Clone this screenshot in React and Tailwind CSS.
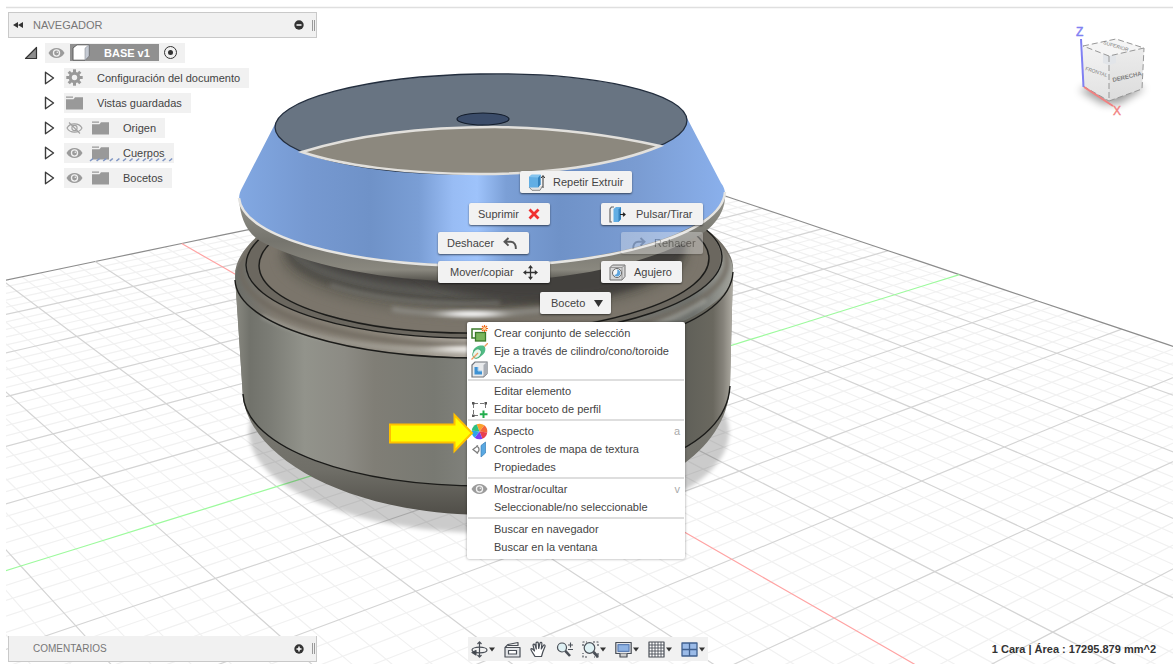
import { useState } from "react";

// [gridX, gridY, screenX, screenY] samples used to fit the ground plane
const ANCHORS = [
  [-6, -1, 95, 261],
  [0, -3, 155, 525],
  [-4, -2, 77, 336],
  [-2, -2, 166, 404],
  [3, 0, 732, 559],
  [4, 0, 834, 618],
  [1, 2, 745, 399],
  [5, 1, 1053, 632],
  [3, 3, 1004, 447],
  [2, 6, 1122, 329],
  [1, 5, 972, 323],
  [-6, 0, 182, 244],
];

function fitPlane(anchors) {
  const n = 8;
  const m = Array.from({ length: n }, () => new Array(n + 1).fill(0));
  for (const [u, v, px, py] of anchors) {
    const x = px / 1000;
    const y = py / 1000;
    const rows = [
      [u, v, 1, 0, 0, 0, -u * x, -v * x, x],
      [0, 0, 0, u, v, 1, -u * y, -v * y, y],
    ];
    for (const r of rows) {
      for (let i = 0; i < n; i++) {
        for (let j = 0; j <= n; j++) m[i][j] += r[i] * r[j];
      }
    }
  }
  for (let c = 0; c < n; c++) {
    let p = c;
    for (let r = c + 1; r < n; r++) if (Math.abs(m[r][c]) > Math.abs(m[p][c])) p = r;
    [m[c], m[p]] = [m[p], m[c]];
    for (let r = 0; r < n; r++) {
      if (r === c) continue;
      const k = m[r][c] / m[c][c];
      for (let j = c; j <= n; j++) m[r][j] -= k * m[c][j];
    }
  }
  return m.map((row, i) => row[n] / row[i]);
}

const H = fitPlane(ANCHORS);

function gridPath(fixed, alongX) {
  const pts = [];
  for (let t = -6; t <= 6; t += 0.5) {
    const u = alongX ? t : fixed;
    const v = alongX ? fixed : t;
    const w = H[6] * u + H[7] * v + 1;
    if (w < 0.1) continue;
    const x = ((H[0] * u + H[1] * v + H[2]) / w) * 1000;
    const y = ((H[3] * u + H[4] * v + H[5]) / w) * 1000;
    pts.push(`${x.toFixed(1)},${y.toFixed(1)}`);
  }
  return "M" + pts.join("L");
}

function Grid() {
  const lines = [];
  for (let k = -30; k <= 30; k++) {
    for (const alongX of [true, false]) {
      let stroke = "#f1f1f1";
      if (k % 5 === 0) stroke = "#d4d4d4";
      if (Math.abs(k) === 30) stroke = "#8c8c8c";
      if (k === 0) stroke = alongX ? "#ffa3a3" : "#9dfa9d";
      lines.push({ key: `${k}${alongX}`, d: gridPath(k / 5, alongX), stroke, order: k % 5 === 0 ? (k === 0 ? 2 : 1) : 0 });
    }
  }
  lines.sort((a, b) => a.order - b.order);
  return (
    <g fill="none">
      {lines.map((l) => <path key={l.key} d={l.d} stroke={l.stroke} strokeWidth="1.2" />)}
    </g>
  );
}

function Scene() {
  return (
    <svg className="absolute inset-0 w-full h-full" viewBox="0 0 1176 666" preserveAspectRatio="xMidYMid slice" aria-hidden="true">
      <defs>
        <clipPath id="view"><rect x="6" y="9" width="1167" height="655" /></clipPath>
        <linearGradient id="cone" gradientUnits="userSpaceOnUse" x1="239" y1="0" x2="725" y2="0">
          <stop offset="0" stopColor="#82a8e2" />
          <stop offset=".14" stopColor="#7699d1" />
          <stop offset=".27" stopColor="#6f92c8" />
          <stop offset=".37" stopColor="#7a9ed5" />
          <stop offset=".44" stopColor="#98bcf4" />
          <stop offset=".49" stopColor="#9ec3fb" />
          <stop offset=".55" stopColor="#7b9fd6" />
          <stop offset=".66" stopColor="#6f92c8" />
          <stop offset=".82" stopColor="#7a9cd2" />
          <stop offset="1" stopColor="#8ab0ec" />
        </linearGradient>
        <linearGradient id="side" gradientUnits="userSpaceOnUse" x1="235" y1="0" x2="733" y2="0">
          <stop offset="0" stopColor="#8a8a82" />
          <stop offset=".03" stopColor="#71726b" />
          <stop offset=".07" stopColor="#7b7c75" />
          <stop offset=".14" stopColor="#92938b" />
          <stop offset=".22" stopColor="#8c8b84" />
          <stop offset=".28" stopColor="#807e76" />
          <stop offset=".4" stopColor="#787972" />
          <stop offset=".46" stopColor="#7f807a" />
          <stop offset=".6" stopColor="#6b6b65" />
          <stop offset=".9" stopColor="#5f5f58" />
          <stop offset=".96" stopColor="#6a685f" />
          <stop offset=".98" stopColor="#85827a" />
          <stop offset="1" stopColor="#b0ada4" />
        </linearGradient>
        <linearGradient id="base" gradientUnits="userSpaceOnUse" x1="0" y1="400" x2="0" y2="515">
          <stop offset="0" stopColor="#7c7b74" />
          <stop offset=".6" stopColor="#706f68" />
          <stop offset="1" stopColor="#504e48" />
        </linearGradient>
        <linearGradient id="shoulder" gradientUnits="userSpaceOnUse" x1="235" y1="0" x2="733" y2="0">
          <stop offset="0" stopColor="#6b6d68" />
          <stop offset=".08" stopColor="#807a70" />
          <stop offset=".3" stopColor="#8c867b" />
          <stop offset=".5" stopColor="#b5afa6" />
          <stop offset=".7" stopColor="#77736b" />
          <stop offset=".92" stopColor="#6f726e" />
          <stop offset="1" stopColor="#a3a49d" />
        </linearGradient>
        <linearGradient id="lip" gradientUnits="userSpaceOnUse" x1="0" y1="200" x2="0" y2="282">
          <stop offset="0" stopColor="#92928a" />
          <stop offset=".5" stopColor="#75746d" />
          <stop offset=".85" stopColor="#8a887f" />
          <stop offset="1" stopColor="#504e48" />
        </linearGradient>
        <filter id="soft" x="-20%" y="-20%" width="140%" height="140%"><feGaussianBlur stdDeviation="4" /></filter>
        <filter id="soft2" x="-20%" y="-50%" width="140%" height="200%"><feGaussianBlur stdDeviation="2" /></filter>
        <filter id="glow" x="-40%" y="-200%" width="180%" height="500%"><feGaussianBlur stdDeviation="10 2" /></filter>
        <clipPath id="well"><ellipse cx="484" cy="262" rx="224" ry="70" transform="rotate(-1 484 262)" /></clipPath>
        <clipPath id="body">
          <path d="M235 276C234 255 258 230 290 215H680C712 228 735 252 733 270L730 386C726 470 610 515 490 515C350 515 252 460 243 398Z" />
        </clipPath>
      </defs>
      <g clipPath="url(#view)">
        <Grid />
        <ellipse cx="489" cy="432" rx="240" ry="101" fill="#000" opacity=".2" filter="url(#soft2)" />

        <g clipPath="url(#body)">
          <rect x="230" y="200" width="510" height="320" fill="url(#base)" />
          <path d="M230 270V398H243C248 450 352 486 486 486C620 486 726 452 729 388H740V270Z" fill="url(#side)" />
          <ellipse cx="484" cy="275" rx="249" ry="82" fill="url(#shoulder)" transform="rotate(-1 484 275)" />
          <ellipse cx="484" cy="266" rx="243" ry="79" fill="none" stroke="#6f695f" strokeWidth="4" filter="url(#soft2)" transform="rotate(-1 484 266)" />
          <path d="M262 316C330 350 420 352 484 350C590 348 660 330 706 300" fill="none" stroke="#b9b9b2" strokeWidth="3" opacity=".7" filter="url(#soft2)" />
          <ellipse cx="474" cy="349" rx="38" ry="3" fill="#f4f2ee" filter="url(#glow)" />
          <ellipse cx="484" cy="261" rx="237" ry="77" fill="#6b675f" transform="rotate(-1 484 261)" />
        </g>
        <g clipPath="url(#well)">
          <rect x="250" y="180" width="470" height="160" fill="#7b756b" />
          <ellipse cx="484" cy="257" rx="206" ry="61" fill="#6e6a61" filter="url(#soft)" />
          <ellipse cx="484" cy="250" rx="198" ry="55" fill="#403e39" filter="url(#soft)" />
          <ellipse cx="474" cy="247" rx="186" ry="51" fill="#64645f" filter="url(#soft)" />
          <ellipse cx="484" cy="240" rx="192" ry="51" fill="#42413c" filter="url(#soft)" />
          <ellipse cx="540" cy="245" rx="145" ry="56" fill="#42413c" filter="url(#soft)" />
          <path d="M392 309C430 316 520 316 570 306" stroke="#8b8983" strokeWidth="5" fill="none" filter="url(#soft2)" />
          <ellipse cx="472" cy="314" rx="30" ry="3" fill="#fff" filter="url(#glow)" />
          <path d="M330 285C380 301 440 305 500 303" stroke="#767671" strokeWidth="3" fill="none" filter="url(#soft2)" />
        </g>
        <g fill="none" stroke="#1b1b19" strokeWidth="1.4">
          <ellipse cx="484" cy="262" rx="225" ry="71" transform="rotate(-1 484 262)" />
          <ellipse cx="484" cy="261" rx="238" ry="77" transform="rotate(-1 484 261)" />
          <path d="M235 280C237 326 350 358 480 358C620 356 730 325 733 272" />
          <path d="M243 394C246 449 352 486 486 486C620 486 726 452 730 386" />
        </g>

        <path d="M239 198C240 218 247 236 266 244C320 270 400 282 482 282C580 280 650 262 698 236C716 226 726 210 725 194Z" fill="url(#lip)" />
        <path d="M275 124L242 188C238 195 238 202 243 209C268 244 362 265 482 265C610 265 715 232 725 195C725 190 724 187 721 183L687 118Z" fill="url(#cone)" />
        <path d="M239 198C243 238 350 266 482 266C614 265 722 234 725 192" fill="none" stroke="#e6e5e2" strokeWidth="2.5" />
        <ellipse cx="481" cy="124" rx="206" ry="50" fill="#687482" stroke="#232e3e" strokeWidth="1.3" transform="rotate(-1 481 124)" />
        <ellipse cx="483" cy="119" rx="26" ry="6" fill="#3b4c69" stroke="#131d2c" strokeWidth="1.2" />
        <path d="M302 152C360 134 430 127 495 127C560 128 615 136 660 146C612 166 545 174 480 174C405 174 340 165 302 152Z" fill="#8c887e" stroke="#e2e0dc" strokeWidth="2.5" />
      </g>
      <path d="M6 7.5H1173" stroke="#dfdfdf" strokeWidth="1.5" />
    </svg>
  );
}

function Eye({ off }) {
  return (
    <svg width="17" height="12" viewBox="0 0 17 12" fill="none" aria-hidden="true">
      {off ? (
        <g stroke="#a0a0a0" strokeWidth="1.1">
          <path d="M1 6C4 .5 13 .5 16 6C13 11.500 4 11.500 1 6Z" />
          <circle cx="8.500" cy="6" r="2.600" />
          <path d="M3 .5L14 11.500" />
        </g>
      ) : (
        <>
          <path d="M.5 6C4-.8 13-.8 16.500 6C13 12.800 4 12.800.5 6Z" fill="#9b9b9b" />
          <circle cx="8.500" cy="6" r="3.700" fill="#f1f1f1" />
          <circle cx="8.500" cy="6" r="2.400" fill="#9b9b9b" />
          <circle cx="9.300" cy="5.200" r=".8" fill="#f1f1f1" />
        </>
      )}
    </svg>
  );
}

function Folder() {
  return (
    <svg width="17" height="14" viewBox="0 0 17 14" aria-hidden="true">
      <path d="M0 .5H7V1.800H0Z M0 3.300H7.500L9 1.300H17V13.500H0Z" fill="#999" />
    </svg>
  );
}

function Gear() {
  return (
    <svg width="17" height="17" viewBox="-8.500 -8.500 17 17" aria-hidden="true">
      {[0, 45, 90, 135].map((a) => (
        <rect key={a} x="-1.500" y="-8.200" width="3" height="16.400" fill="#999" transform={`rotate(${a})`} />
      ))}
      <circle r="5.800" fill="#999" />
      <circle r="2.700" fill="#f1f1f1" />
    </svg>
  );
}

function Expander() {
  return (
    <svg width="11" height="14" viewBox="0 0 11 14" aria-hidden="true">
      <path d="M1.500 1.200V12.800L9.500 7Z" fill="#fff" stroke="#3c3c3c" strokeWidth="1.400" strokeLinejoin="round" />
    </svg>
  );
}

const NODES = [
  { label: "Configuración del documento", icon: "gear" },
  { label: "Vistas guardadas" },
  { label: "Origen", eye: "off" },
  { label: "Cuerpos", eye: "on", marked: true },
  { label: "Bocetos", eye: "on" },
];

function TreeNode({ node }) {
  return (
    <li className="flex items-center h-[25px] pl-9">
      <button aria-label={`Expandir ${node.label}`} className="w-5"><Expander /></button>
      <div className="relative flex items-center h-5 pl-[2px] pr-[9px] bg-[#f1f1f1]">
        {node.eye && (
          <button aria-label={`Visibilidad de ${node.label}`} className="w-[26px]"><Eye off={node.eye === "off"} /></button>
        )}
        <span className="w-[31px]">{node.icon === "gear" ? <Gear /> : <Folder />}</span>
        <span>{node.label}</span>
        {node.marked && (
          <svg className="absolute left-[25px] bottom-[1px]" width="86" height="5" viewBox="0 0 86 5" aria-hidden="true">
            {Array.from({ length: 13 }, (_, i) => (
              <path key={i} d={`M${i * 6.6 + 1} 4L${i * 6.6 + 4} 1.500`} stroke="#7e95c4" strokeWidth="1.600" />
            ))}
          </svg>
        )}
      </div>
    </li>
  );
}

function Grip() {
  return <span className="w-[3px] h-[11px] border-x border-[#9a9a9a]" />;
}

function RoundToggle({ open, label, onClick }) {
  return (
    <button aria-label={label} onClick={onClick}>
      <svg width="10" height="10" viewBox="0 0 10 10" aria-hidden="true">
        <circle cx="5" cy="5" r="4.700" fill="#333" />
        <path d={open ? "M2.500 5H7.500" : "M2.500 5H7.500M5 2.500V7.500"} stroke="#fff" strokeWidth="1.500" />
      </svg>
    </button>
  );
}

function Browser() {
  const [open, setOpen] = useState(true);
  return (
    <nav className="w-[309px]">
      <div className="flex items-center h-[26px] pl-1 pr-[1px] bg-[#f1f1f1] border border-[#c9c9c9]">
        <svg width="10" height="6" viewBox="0 0 10 6" aria-hidden="true"><path d="M5 0V6L0 3ZM10 0V6L5 3Z" fill="#333" /></svg>
        <h2 className="ml-[10px] text-[#777]">NAVEGADOR</h2>
        <div className="ml-auto flex items-center gap-2">
          <RoundToggle open={open} label="Contraer navegador" onClick={() => setOpen(!open)} />
          <Grip />
        </div>
      </div>
      {open && (
        <ul className="pt-[2px]">
          <li className="flex items-center h-[25px] pl-4">
            <button aria-label="Contraer BASE v1" className="w-[21px]">
              <svg width="14" height="14" viewBox="0 0 14 14" aria-hidden="true">
                <path d="M12.500 1.500V12.500H1.500Z" fill="#8d8d8d" stroke="#333" strokeWidth="1.200" strokeLinejoin="round" />
              </svg>
            </button>
            <div className="flex items-center h-5 px-[3px] bg-[#f1f1f1]">
              <button aria-label="Visibilidad de BASE v1" className="w-[22px]"><Eye /></button>
              <div className="flex items-center h-[17px] w-[89px] bg-[#909090] text-white font-bold">
                <svg className="ml-[2px] mr-[14px]" width="18" height="17" viewBox="0 0 18 17" aria-hidden="true">
                  <path d="M1 4L5 .8H17V12L13 16.200H1Z" fill="#fff" stroke="#5e5e5e" />
                  <path d="M13 4.200L17 .8V12L13 16.200Z" fill="#c5cad3" stroke="#8b8f96" strokeWidth=".6" />
                </svg>
                <span>BASE v1</span>
              </div>
              <label className="ml-[5px] mr-[5px] flex items-center justify-center size-[13px] rounded-full border border-[#333]">
                <input type="radio" name="active" aria-label="Activar BASE v1" defaultChecked className="appearance-none size-[5px] rounded-full bg-[#333]" />
              </label>
            </div>
          </li>
          {NODES.map((n) => <TreeNode key={n.label} node={n} />)}
        </ul>
      )}
    </nav>
  );
}

function ViewCube() {
  return (
    <svg className="mt-[6px] mr-[18px]" width="84" height="100" viewBox="1071 18 84 100" role="img" aria-label="ViewCube">
      <defs>
        <filter id="cubeShadow" x="-40%" y="-40%" width="180%" height="180%"><feGaussianBlur stdDeviation="4" /></filter>
        <linearGradient id="cubeL" x1="0" y1="0" x2="0" y2="1"><stop offset="0" stopColor="#f3f3f3" /><stop offset="1" stopColor="#e2e2e2" /></linearGradient>
        <linearGradient id="cubeR" x1="0" y1="0" x2="0" y2="1"><stop offset="0" stopColor="#ececec" /><stop offset="1" stopColor="#dcdcdc" /></linearGradient>
      </defs>
      <path d="M1080 90L1110 80L1146 88L1120 104H1104Z" fill="#000" opacity=".38" filter="url(#cubeShadow)" />
      <path d="M1084 46L1110 56V101L1084 86Z" fill="url(#cubeL)" />
      <path d="M1110 56L1145 48L1143 89L1110 101Z" fill="url(#cubeR)" />
      <path d="M1084 46L1117 39L1145 48L1110 56Z" fill="#f5f5f5" />
      <path d="M1104 54L1110 56L1117 54V63L1110 65L1104 63Z" fill="#e2e5e9" />
      <path d="M1084 46L1117 39L1145 48L1110 56ZM1110 56V101L1143 89L1145 48M1084 86L1110 101" fill="none" stroke="#979797" strokeDasharray="6 3" />
      <g fontFamily="Liberation Sans, Arial, sans-serif" fill="#808080">
        <text x="1086" y="70" fontSize="5" transform="rotate(18 1086 70)">FRONTAL</text>
        <text x="1114" y="82" fontSize="6" fontWeight="bold" transform="rotate(-13 1114 82)">DERECHA</text>
        <text x="1104" y="44" fontSize="5" transform="rotate(17 1104 44)">SUPERIOR</text>
      </g>
      <path d="M1082 39L1084.500 87" stroke="#8080f2" strokeWidth="2" />
      <path d="M1085 87L1114 106" stroke="#f28080" strokeWidth="2" />
      <g fontFamily="Liberation Sans, Arial, sans-serif" fontSize="12">
        <text x="1077" y="36" fill="#8080f2" stroke="#8080f2" strokeWidth=".4">Z</text>
        <text x="1114" y="115" fill="#f28080" stroke="#f28080" strokeWidth=".4">X</text>
      </g>
    </svg>
  );
}

const S = { width: 17, height: 17, viewBox: "0 0 17 17", fill: "none", "aria-hidden": true };

const ICONS = {
  extrude: (
    <svg {...S}>
      <path d="M1 13L4 16.300H12L14.500 12" stroke="#8a8a8a" fill="#e3e3e3" />
      <path d="M1 3L3.500 .8H12.500V10.500L10 13.500H1Z" fill="#62aee4" />
      <path d="M10 3.500L12.500.8V10.500L10 13.500Z" fill="#3482bd" />
      <path d="M1 3L3.500 .8H12.500L10 3.500Z" fill="#84c4ef" />
      <path d="M15 14V2M13.200 4L15 1.500L16.800 4" stroke="#333" />
    </svg>
  ),
  cross: <svg {...S} width="12" height="12" viewBox="0 0 12 12"><path d="M1.500 1.500L10.500 10.500M10.500 1.500L1.500 10.500" stroke="#f03030" strokeWidth="2.800" /></svg>,
  press: (
    <svg {...S}>
      <path d="M5 1H2.500L1 3V16H3" stroke="#666" strokeWidth="1.200" />
      <path d="M4.500 3L7 1H12V13L9.500 16H4.500Z" fill="#62aee4" />
      <path d="M9.500 3.500L12 1V13L9.500 16Z" fill="#3482bd" />
      <path d="M11 8.500H16M14 6.800L16 8.500L14 10.200" stroke="#222" strokeWidth="1.200" />
    </svg>
  ),
  undo: <svg {...S} width="15" height="13" viewBox="0 0 15 13"><path d="M5.500 1L1.500 4.800L5.500 8.600M1.500 4.800H8C11.500 4.800 13 8 12.800 12" stroke="#555" strokeWidth="1.900" /></svg>,
  redo: <svg {...S} width="15" height="13" viewBox="0 0 15 13"><path d="M9.500 1L13.500 4.800L9.500 8.600M13.500 4.800H7C3.500 4.800 2 8 2.200 12" stroke="#777" strokeWidth="1.900" /></svg>,
  move: (
    <svg {...S} width="15" height="15" viewBox="0 0 15 15">
      <path d="M7.500 2V13M2 7.500H13" stroke="#333" strokeWidth="1.300" />
      <path d="M7.500 0L10 3.200H5ZM7.500 15L5 11.800H10ZM0 7.500L3.200 5V10ZM15 7.500L11.800 10V5Z" fill="#333" />
    </svg>
  ),
  hole: (
    <svg {...S}>
      <path d="M1 3.500L3.500 1H16V12.500L13 16H1Z" fill="#d7d7d7" stroke="#707070" />
      <path d="M1 3.500H13V16M13 3.500L16 1" stroke="#8a8a8a" strokeWidth=".8" />
      <circle cx="8" cy="9" r="4.500" fill="#f7f7f7" stroke="#666" />
      <path d="M8 5.500A3.500 3.500 0 1 1 5 11C8 11 9 8 8 5.500Z" fill="#5ea5de" />
    </svg>
  ),
  down: <svg {...S} width="11" height="9" viewBox="0 0 11 9"><path d="M1 1H10L5.500 8Z" fill="#333" /></svg>,
  set: (
    <svg {...S}>
      <path d="M11 4H1V13H4" stroke="#3b7a2a" strokeWidth="1.500" />
      <rect x="4.500" y="7.500" width="10" height="8.500" fill="#7ab55c" stroke="#3b7a2a" strokeWidth="1.300" />
      <path d="M13.500 0V7M10 3.500H17M11 1L16 6M16 1L11 6" stroke="#f06a1c" strokeWidth="1.200" />
      <circle cx="13.500" cy="3.500" r="1.500" fill="#ffd9a0" />
    </svg>
  ),
  axis: (
    <svg {...S}>
      <path d="M2 8C3 4 8 2 12 2.500C15.500 3.500 15 9 11.500 12L7 15.500Z" fill="#52bb85" />
      <ellipse cx="6" cy="10.500" rx="3.800" ry="5" transform="rotate(35 6 10.500)" fill="#e7f7ee" stroke="#43a874" />
      <path d="M.5 16.500L7 10M13.500 3.500L17 0" stroke="#ee9a60" strokeWidth="1.300" />
    </svg>
  ),
  shell: (
    <svg {...S}>
      <path d="M1 4L4 1H16V12.500L12.500 16H1Z" fill="#e8eaec" stroke="#70757b" strokeWidth="1.200" />
      <path d="M12.500 4L16 1V12.500L12.500 16Z" fill="#a9aeb5" />
      <path d="M3.500 6H7V10H11V13.500H3.500Z" fill="#3f92d3" />
      <path d="M7 6V10H11" stroke="#9ccbee" />
    </svg>
  ),
  sketch: (
    <svg {...S}>
      <path d="M2.500 3V14M3 2.500H14M14.500 3V9M3 14.500H8" stroke="#777" strokeDasharray="4 2" />
      <path d="M1 1h2.500v2.500H1ZM13.500 1H16v2.500H13.500ZM1 13.500h2.500V16H1Z" fill="#555" />
      <path d="M12.500 9.500V17M8.800 13.200H16.500" stroke="#22ad4d" strokeWidth="2" />
    </svg>
  ),
  color: (
    <svg {...S} viewBox="-8.500 -8.500 17 17">
      {["#fba22c", "#f4683a", "#e8404f", "#7d3cf0", "#2ea3ea", "#2fbf80"].map((c, i) => (
        <path key={c} d="M0 0L-3.900-6.750A7.800 7.800 0 0 1 3.900-6.750Z" fill={c} transform={`rotate(${i * 60 + 8})`} />
      ))}
    </svg>
  ),
  texture: (
    <svg {...S}>
      <path d="M7 4.500L2 8.500L7 12.500M5 5.500C9 5 9 12 5 11.500" stroke="#7d7d7d" strokeWidth="1.300" />
      <path d="M10 4.500L14.500 1V12L10 16Z" fill="#59a8e2" stroke="#3a7eb5" strokeWidth=".7" />
    </svg>
  ),
  eye: <Eye />,
};

function PieButton({ icon, label, className, disabled }) {
  return (
    <button
      disabled={disabled}
      className={`absolute flex items-center h-[22px] whitespace-nowrap rounded-xs bg-[#f2f2f2] shadow-[0_1px_2px_rgba(0,0,0,0.55)] disabled:opacity-35 ${className}`}
    >
      {ICONS[icon]}
      <span>{label}</span>
    </button>
  );
}

const MENU = [
  [
    { icon: "set", label: "Crear conjunto de selección" },
    { icon: "axis", label: "Eje a través de cilindro/cono/toroide" },
    { icon: "shell", label: "Vaciado" },
  ],
  [{ label: "Editar elemento" }, { icon: "sketch", label: "Editar boceto de perfil" }],
  [
    { icon: "color", label: "Aspecto", hint: "a" },
    { icon: "texture", label: "Controles de mapa de textura" },
    { label: "Propiedades" },
  ],
  [{ icon: "eye", label: "Mostrar/ocultar", hint: "v" }, { label: "Seleccionable/no seleccionable" }],
  [{ label: "Buscar en navegador" }, { label: "Buscar en la ventana" }],
];

function MarkingMenu() {
  return (
    <div className="absolute left-[438px] top-[171px] w-[266px] h-[388px]">
      <PieButton icon="extrude" label="Repetir Extruir" className="left-[82px] top-0 pl-2 w-[112px] gap-2" />
      <PieButton icon="cross" label="Suprimir" className="left-[31px] top-8 w-[81px] pl-[9px] gap-[9px] flex-row-reverse justify-end" />
      <PieButton icon="press" label="Pulsar/Tirar" className="left-[163px] top-8 w-[102px] pl-2 gap-[10px]" />
      <PieButton icon="undo" label="Deshacer" className="left-0 top-[61px] w-[91px] pl-[9px] gap-[9px] flex-row-reverse justify-end" />
      <PieButton icon="redo" label="Rehacer" disabled className="left-[183px] top-[61px] w-[82px] pl-[10px] gap-2" />
      <PieButton icon="move" label="Mover/copiar" className="left-0 top-[90px] w-[112px] pl-3 gap-[9px] flex-row-reverse justify-end" />
      <PieButton icon="hole" label="Agujero" className="left-[163px] top-[90px] w-[81px] pl-2 gap-2" />
      <PieButton icon="down" label="Boceto" className="left-[102px] top-[121px] w-[71px] pl-[11px] gap-2 flex-row-reverse justify-end" />

      <div role="menu" className="absolute left-[29px] top-[151px] w-[218px] pt-[2px] pb-[3px] rounded-xs bg-white shadow-[0_0_3px_rgba(0,0,0,0.4)]">
        {MENU.map((group, g) => (
          <div key={g}>
            {g > 0 && <div className="h-1 py-px mx-px"><div className="h-[2px] bg-[#dedede]" /></div>}
            {group.map((item) => (
              <button key={item.label} role="menuitem" className="flex items-center w-full h-[18px] pl-1 pr-[5px] whitespace-nowrap hover:bg-[#e6f1fb]">
                <span className="w-[23px] shrink-0">{item.icon && ICONS[item.icon]}</span>
                <span>{item.label}</span>
                {item.hint && <span className="ml-auto text-[#aaa]">{item.hint}</span>}
              </button>
            ))}
          </div>
        ))}
      </div>

      <svg className="absolute left-[-50px] top-[240px]" width="88" height="44" viewBox="388 411 88 44" aria-hidden="true">
        <path d="M390 424.500H454.500V415L472 433L454.500 451V442.500H390Z" fill="#ff0" stroke="#ffc000" strokeWidth="2" />
      </svg>
    </div>
  );
}

const TOOLS = [
  { label: "Orbitar", more: true, art: <><ellipse cx="8.500" cy="9" rx="7.500" ry="2.800" /><path d="M8.500 1V16M6.500 3L8.500 .8L10.500 3M6.500 14L8.500 16.200L10.500 14" /><path d="M5 9.500L1 11.500L5 14Z" fill="#3b3f46" /></> },
  { label: "Mirar a", art: <><path d="M1 6.500H16V16H1Z" fill="#e3e5e8" /><path d="M4.500 9.500H12.500V13H4.500Z" fill="#fff" /><path d="M1 6.500L4 3.500L14 1.500V4.500H4" /></> },
  { label: "Encuadre", art: <path d="M5 15.500C3.500 12.500 1 10 .8 8C1.500 7 3 8 4.500 10L3 4C3.500 2.500 4.800 3 5.200 4.500L6.300 8L6 2C6.500 .8 8 .8 8.300 2L8.700 7.500L10 2C10.600 1 11.800 1.300 11.900 2.500L11.300 8L13.500 4.200C14.500 3.500 15.500 4.200 15 5.500L12.800 11L11.500 15.500Z" fill="#fff" /> },
  { label: "Zoom", art: <><circle cx="6" cy="6.500" r="4.500" fill="#dff1f4" /><path d="M9.300 9.800L14 15" strokeWidth="2.600" /><path d="M12 4H17M14.500 1.500V6.500M12 8.500H17" strokeWidth="1.100" /></> },
  { label: "Ajustar", more: true, art: <><path d="M1 5V1H5M11 1H16V5M16 12V16H12M5 16H1V12" strokeDasharray="2 1.500" /><circle cx="7.500" cy="7" r="5.300" fill="#dff1f4" /><path d="M11.500 11L16 16" strokeWidth="2.800" /></> },
  { label: "Visualización", more: true, art: <><path d="M.8 1.500H16.200V12.500H.8Z" fill="#e2e4e8" /><path d="M3 3.700H14V10.300H3Z" fill="#8fb3e4" stroke="#5d7fb5" /><path d="M5 12.500V16H12V12.500" fill="#ccc" /></> },
  { label: "Rejilla", more: true, art: <><path d="M1 1H16V16H1Z" fill="#fff" /><path d="M4 1V16M7 1V16M10 1V16M13 1V16M1 4H16M1 7H16M1 10H16M1 13H16" strokeWidth=".9" /></> },
  { label: "Ventanas", more: true, art: <><path d="M1 2H16V15H1Z" fill="#9bbbe8" stroke="#40608f" strokeWidth="1.300" /><path d="M8.500 2V15M1 8.500H16" stroke="#40608f" strokeWidth="1.300" /></> },
];

function NavBar() {
  return (
    <div role="toolbar" aria-label="Navegación" className="flex items-center h-6 px-[3px] gap-[9px] bg-[#f1f1f1]">
      {TOOLS.map((t) => (
        <button key={t.label} aria-label={t.label} className="flex items-center gap-[1px]">
          <svg width="17" height="17" viewBox="0 0 17 17" fill="none" stroke="#4a4f57" strokeWidth="1.200" strokeLinejoin="round" aria-hidden="true">{t.art}</svg>
          {t.more && <svg width="6" height="5" viewBox="0 0 6 5" aria-hidden="true"><path d="M0 .5H6L3 4.500Z" fill="#333" /></svg>}
        </button>
      ))}
    </div>
  );
}

export default function App() {
  return (
    <div className="relative flex flex-col min-h-screen overflow-hidden bg-white text-[11px] leading-4 text-[#444] font-['Liberation_Sans',Arial,sans-serif]">
      <Scene />
      <header className="relative flex justify-between items-start pt-3 pl-2 pr-1">
        <Browser />
        <ViewCube />
      </header>
      <MarkingMenu />
      <footer className="relative mt-auto grid grid-cols-[1fr_auto_1fr] items-center pb-1 pl-2 pr-2">
        <section className="flex items-center w-[309px] h-[26px] pl-6 pr-[1px] bg-[#f1f1f1] border-b border-x border-[#c9c9c9]">
          <h2 className="text-[#777] text-[10px]">COMENTARIOS</h2>
          <div className="ml-auto flex items-center gap-2">
            <RoundToggle label="Mostrar comentarios" />
            <Grip />
          </div>
        </section>
        <NavBar />
        <p className="justify-self-end pr-3 font-bold text-[#333]">1 Cara | Área : 17295.879 mm^2</p>
      </footer>
    </div>
  );
}
